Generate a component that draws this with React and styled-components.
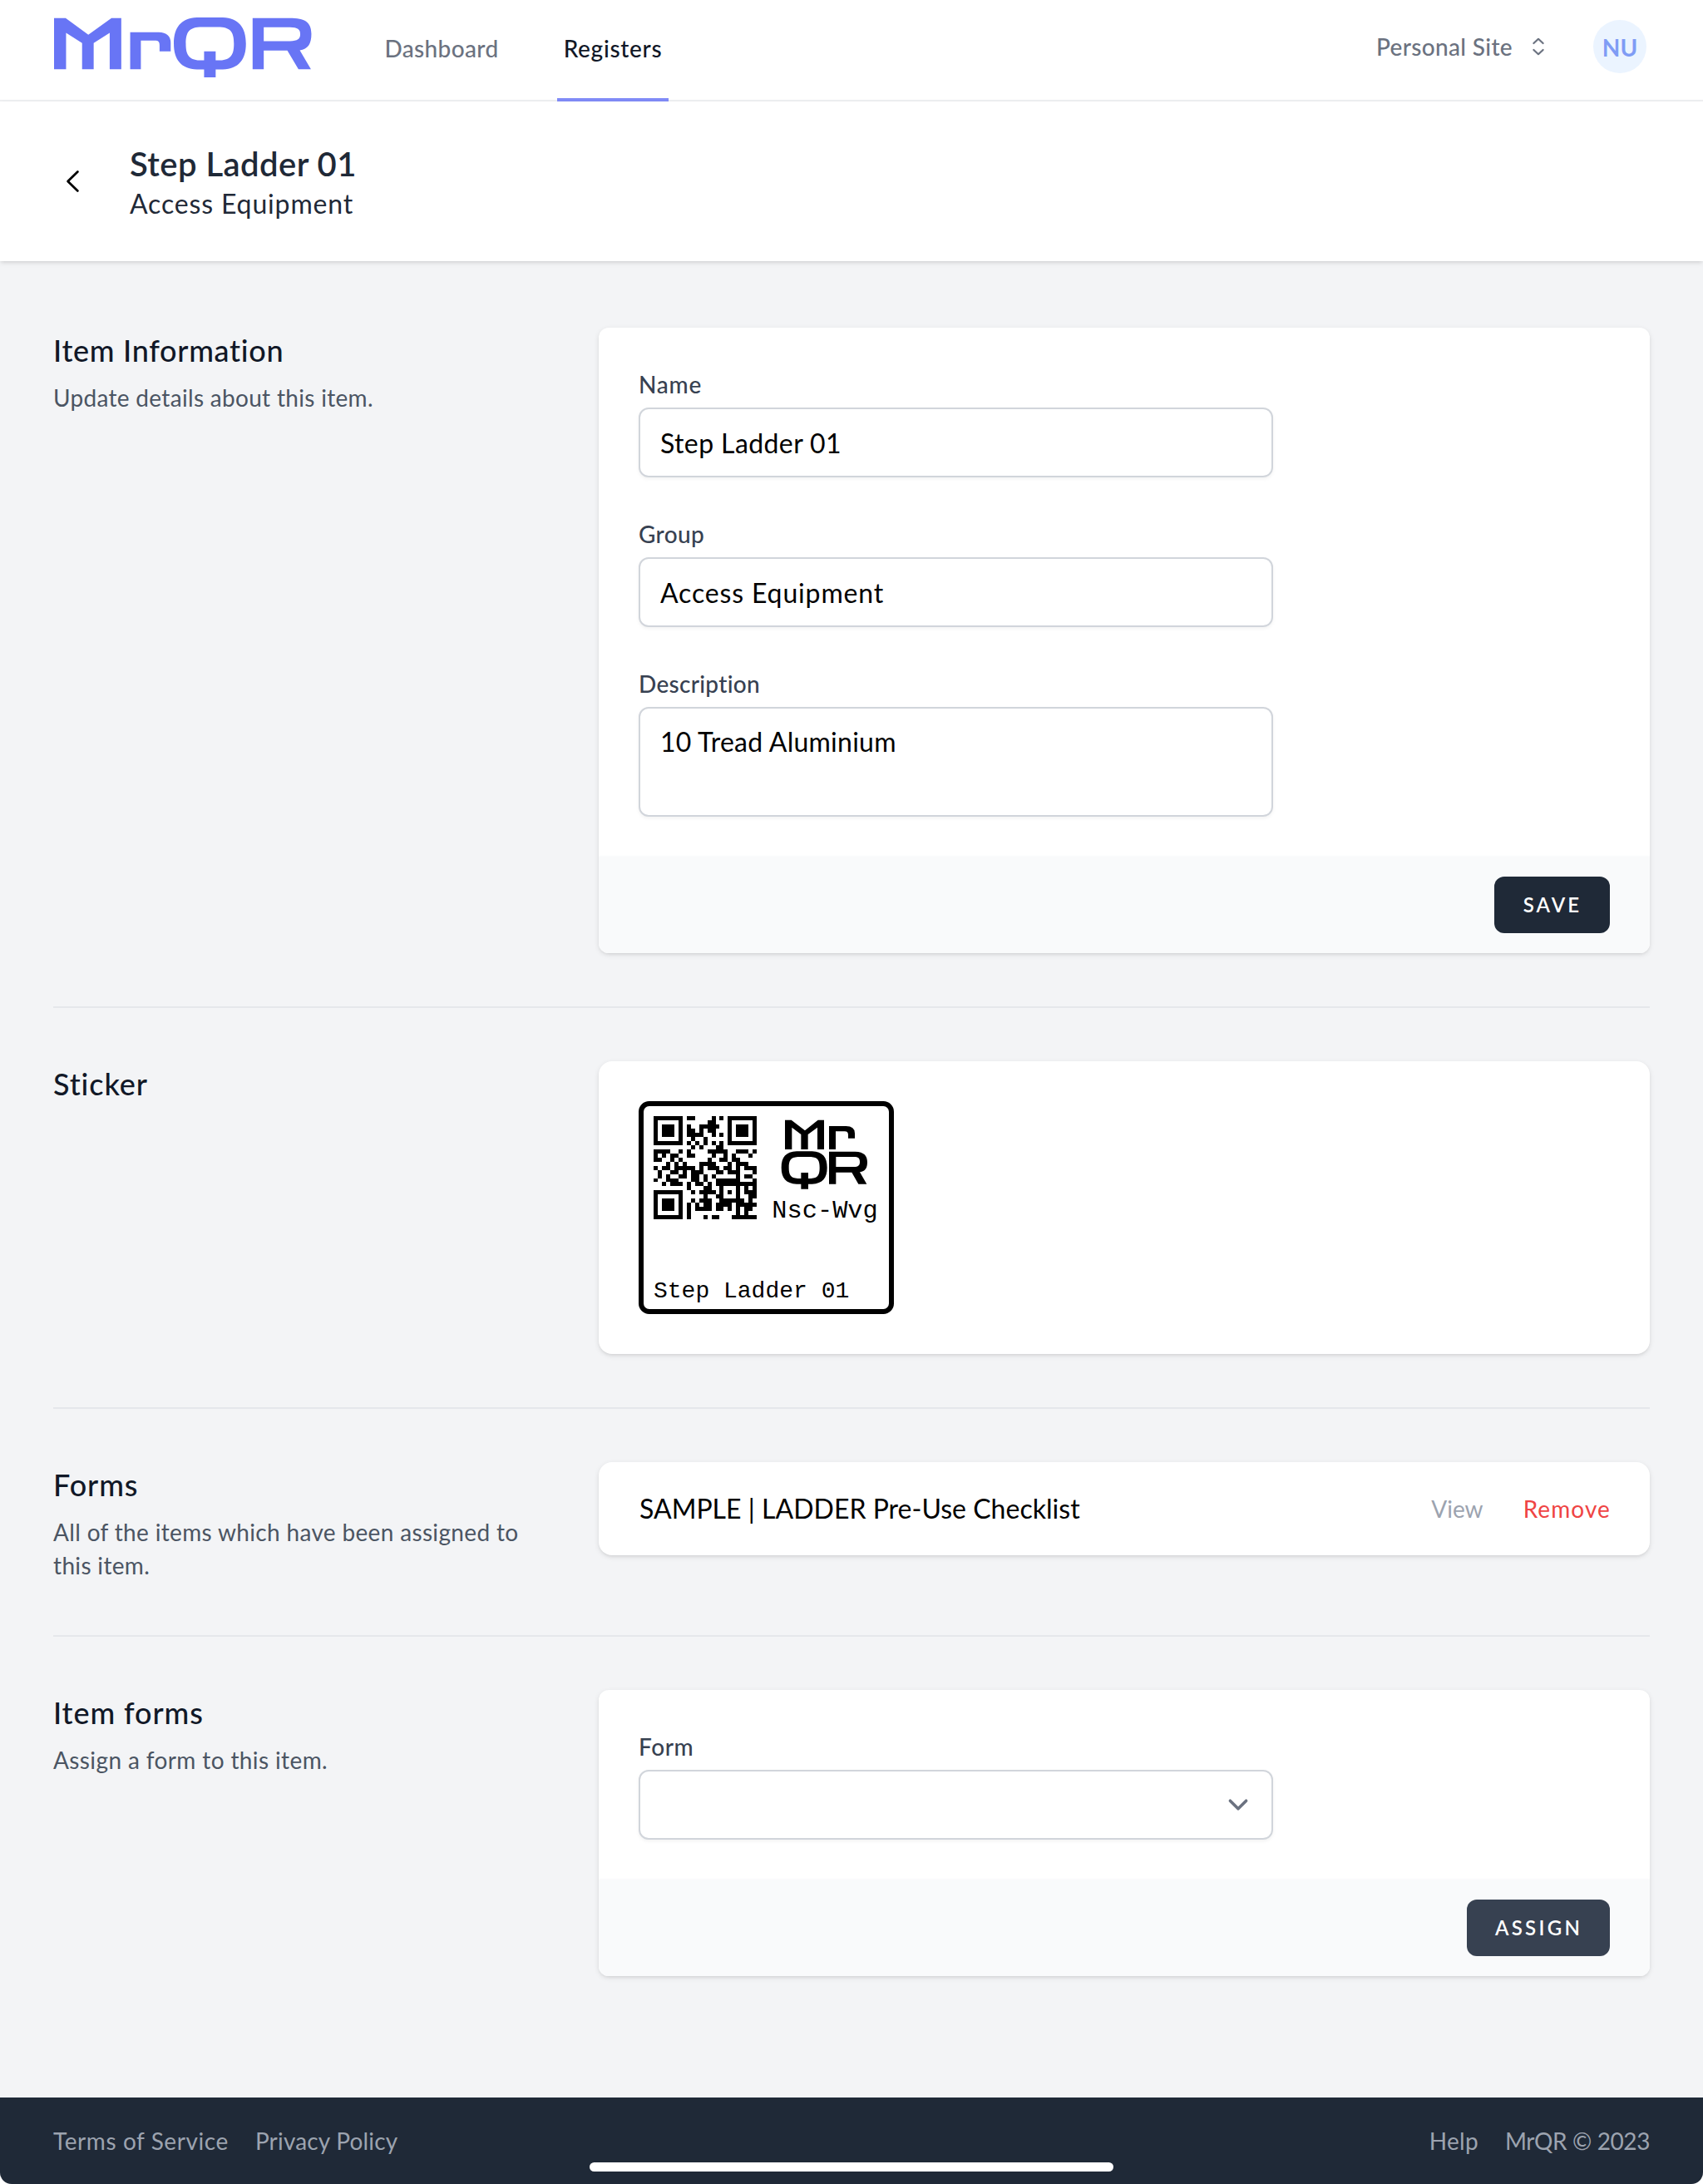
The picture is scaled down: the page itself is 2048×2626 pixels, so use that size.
import React from "react";
import styled, { createGlobalStyle, css } from "styled-components";

const GlobalStyle = createGlobalStyle`
  *, *::before, *::after { box-sizing: border-box; }
  html { background: #fff; }
  body {
    margin: 0;
    font-family: Lato, "Open Sans", sans-serif;
    -webkit-font-smoothing: antialiased;
  }
  h1, h2, p { margin: 0; }
`;

/* ---------- QR code (version 2, level L, mask 3) ---------- */

const QR_SIZE = 25;
const QR_FORMAT = "111100010011101".split("").map(Number);

function gfMultiply(a, b) {
  let r = 0;
  for (let i = 7; i >= 0; i--) {
    r = (r << 1) ^ ((r >> 7) * 0x11d);
    r ^= ((b >> i) & 1) * a;
  }
  return r & 255;
}

function errorCodewords(data, degree) {
  const gen = Array(degree).fill(0);
  gen[degree - 1] = 1;
  let root = 1;
  for (let i = 0; i < degree; i++) {
    for (let j = 0; j < degree; j++) {
      gen[j] = gfMultiply(gen[j], root);
      if (j + 1 < degree) gen[j] ^= gen[j + 1];
    }
    root = gfMultiply(root, 2);
  }
  const ecc = Array(degree).fill(0);
  for (const b of data) {
    const factor = b ^ ecc.shift();
    ecc.push(0);
    gen.forEach((g, i) => {
      ecc[i] ^= gfMultiply(g, factor);
    });
  }
  return ecc;
}

function makeQr(text) {
  const bits = [];
  const push = (v, n) => {
    for (let i = n - 1; i >= 0; i--) bits.push((v >> i) & 1);
  };
  push(4, 4);
  push(text.length, 8);
  for (const ch of text) push(ch.charCodeAt(0), 8);
  push(0, Math.min(4, 272 - bits.length));
  while (bits.length % 8) bits.push(0);
  const data = [];
  for (let i = 0; i < bits.length; i += 8) {
    data.push(parseInt(bits.slice(i, i + 8).join(""), 2));
  }
  for (let p = 0; data.length < 34; p++) data.push(p % 2 ? 17 : 236);
  const stream = [...data, ...errorCodewords(data, 10)].flatMap((b) =>
    [7, 6, 5, 4, 3, 2, 1, 0].map((i) => (b >> i) & 1)
  );

  const m = Array.from({ length: QR_SIZE }, () => Array(QR_SIZE).fill(null));
  const finder = (r0, c0) => {
    for (let r = -1; r < 8; r++) {
      for (let c = -1; c < 8; c++) {
        const y = r0 + r;
        const x = c0 + c;
        if (y < 0 || x < 0 || y >= QR_SIZE || x >= QR_SIZE) continue;
        const d = Math.max(Math.abs(r - 3), Math.abs(c - 3));
        m[y][x] = d !== 2 && d !== 4 ? 1 : 0;
      }
    }
  };
  finder(0, 0);
  finder(0, 18);
  finder(18, 0);
  for (let r = -2; r <= 2; r++) {
    for (let c = -2; c <= 2; c++) {
      m[18 + r][18 + c] = Math.max(Math.abs(r), Math.abs(c)) !== 1 ? 1 : 0;
    }
  }
  for (let i = 8; i < 17; i++) {
    m[6][i] = 1 - (i % 2);
    m[i][6] = 1 - (i % 2);
  }
  [0, 1, 2, 3, 4, 5, 7, 8].forEach((c, i) => {
    m[8][c] = QR_FORMAT[i];
  });
  [7, 5, 4, 3, 2, 1, 0].forEach((r, i) => {
    m[r][8] = QR_FORMAT[8 + i];
  });
  for (let i = 0; i < 7; i++) m[24 - i][8] = QR_FORMAT[i];
  for (let i = 7; i < 15; i++) m[8][10 + i] = QR_FORMAT[i];
  m[17][8] = 1;

  let k = 0;
  let up = true;
  for (let c = 24; c > 0; c -= 2) {
    if (c === 6) c = 5;
    for (let i = 0; i < QR_SIZE; i++) {
      const r = up ? 24 - i : i;
      for (const x of [c, c - 1]) {
        if (m[r][x] === null) {
          m[r][x] = (stream[k++] || 0) ^ ((r + x) % 3 === 0 ? 1 : 0);
        }
      }
    }
    up = !up;
  }
  return m;
}

const qrPath = (text) =>
  makeQr(text)
    .map((row, y) => row.map((v, x) => (v ? `M${x} ${y}h1v1h-1z` : "")).join(""))
    .join("");

/* ---------- Shared ---------- */

const Text = styled.span`
  display: block;
  letter-spacing: ${(p) => p.$track || 0}px;
  white-space: ${(p) => (p.$wrap ? "normal" : "nowrap")};
`;

const cardShadow = css`
  box-shadow: 0 2px 6px rgba(0, 0, 0, 0.1), 0 2px 4px -2px rgba(0, 0, 0, 0.1);
`;

const Page = styled.div`
  width: 2048px;
  min-height: 2626px;
  display: flex;
  flex-direction: column;
  background: #f3f4f6;
  border-radius: 0 0 14px 14px;
  overflow: hidden;
`;

/* ---------- Top navigation ---------- */

const Nav = styled.nav`
  height: 122px;
  display: flex;
  padding: 0 64px;
  background: #fff;
  border-bottom: 2px solid #f0f1f3;
`;

const Logo = styled.svg`
  display: block;
  width: 310px;
  height: 72px;
  margin: 20.5px 0 0 0.5px;
  fill: #6875f5;
`;

const Tabs = styled.div`
  display: flex;
  gap: 64px;
  height: 122px;
  margin-left: 81.5px;
`;

const Tab = styled.a`
  display: flex;
  align-items: center;
  width: ${(p) => p.$width}px;
  justify-content: center;
  padding-bottom: 2px;
  border-bottom: 4px solid ${(p) => (p.$active ? "#818cf8" : "transparent")};
  color: ${(p) => (p.$active ? "#111827" : "#6b7280")};
  font-size: 28px;
  font-weight: 500;
  line-height: 40px;
`;

const NavRight = styled.div`
  display: flex;
  align-items: center;
  height: 112px;
  margin-left: auto;
  padding-right: 4px;
`;

const SiteSwitch = styled.div`
  display: flex;
  align-items: center;
  gap: 15px;
  margin-right: 50px;
  color: #6b7280;
  font-size: 28px;
  font-weight: 500;
  line-height: 40px;
`;

const Avatar = styled.div`
  width: 64px;
  height: 64px;
  display: flex;
  align-items: center;
  justify-content: center;
  padding-top: 1px;
  border-radius: 50%;
  background: #ebf4ff;
  color: #7f9cf5;
  font-size: 28px;
  font-weight: 700;
`;

/* ---------- Page header ---------- */

const Header = styled.header`
  height: 192px;
  display: flex;
  align-items: center;
  padding: 0 64px;
  background: #fff;
  color: #1f2937;
  z-index: 1;
  ${cardShadow}
`;

const BackIcon = styled.svg`
  width: 48px;
  height: 48px;
  margin-right: 44px;
`;

const Heading = styled.div`
  padding-top: 6px;
`;

const Title = styled.h1`
  font-size: 40px;
  font-weight: 600;
  line-height: 48px;
`;

const Subtitle = styled.p`
  font-size: 32px;
  line-height: 48px;
`;

/* ---------- Sections ---------- */

const Main = styled.main`
  flex: 1;
  padding: 80px 64px 0;
`;

const Section = styled.section`
  display: grid;
  grid-template-columns: 608px 1264px;
  column-gap: 48px;
  align-items: start;
`;

const Divider = styled.hr`
  height: 2px;
  margin: 64px 0;
  border: 0;
  background: #e5e7eb;
`;

const SectionTitle = styled.h2`
  color: #111827;
  font-size: 36px;
  font-weight: 500;
  line-height: 54px;
  padding-bottom: 2px;
`;

const SectionText = styled.p`
  max-width: 590px;
  margin-top: 8px;
  color: #4b5563;
  font-size: 28px;
  line-height: 40px;
`;

const Card = styled.div`
  border-radius: ${(p) => p.$radius || 12}px;
  background: #fff;
  overflow: hidden;
  ${cardShadow}
`;

const CardBody = styled.div`
  display: grid;
  row-gap: 48px;
  padding: 48px;
`;

const CardFooter = styled.div`
  display: flex;
  justify-content: flex-end;
  padding: 24px 48px;
  background: #f9fafb;
  box-shadow: 0 -1px 2px #f9fafb;
`;

const Field = styled.label`
  display: flex;
  flex-direction: column;
  gap: 8px;
  width: 762.67px;
  color: #374151;
  font-size: 28px;
  font-weight: 500;
  line-height: 40px;
`;

const controlStyle = css`
  display: block;
  width: 100%;
  margin: 0;
  border: 2px solid #d1d5db;
  border-radius: 12px;
  outline: none;
  background: #fff;
  box-shadow: 0 2px 4px rgba(0, 0, 0, 0.05);
  color: #000;
  font-family: inherit;
  font-size: 32px;
  font-weight: 400;
  line-height: 48px;
`;

const Input = styled.input`
  ${controlStyle}
  height: 84px;
  padding: 16px 24px;
  letter-spacing: ${(p) => p.$track}px;
`;

const TextArea = styled.textarea`
  ${controlStyle}
  height: 132px;
  padding: 16px 24px;
  letter-spacing: 0.25px;
  resize: none;
  overflow: hidden;
`;

const Select = styled.div`
  ${controlStyle}
  height: 84px;
  display: flex;
  align-items: center;
  justify-content: flex-end;
  padding-right: 16px;
`;

const Button = styled.button`
  width: ${(p) => p.$width}px;
  height: 68px;
  padding: 0 0 0 1px;
  border: 0;
  border-radius: 12px;
  background: ${(p) => p.$color};
  color: #fff;
  font-family: inherit;
  font-size: 24px;
  font-weight: 600;
  line-height: 32px;
  text-align: center;
`;

const FormRow = styled.div`
  height: 112px;
  display: flex;
  align-items: center;
  padding: 0 47px 0 49px;
  color: #000;
  font-size: 32px;
  line-height: 48px;
`;

const RowActions = styled.div`
  display: flex;
  gap: 48px;
  margin-left: auto;
  font-size: 28px;
  line-height: 40px;
`;

const Action = styled.a`
  color: ${(p) => (p.$danger ? "#ef4444" : "#9ca3af")};
`;

const StickerImage = styled.svg`
  display: block;
  width: 307px;
  height: 256px;
`;

/* ---------- Footer ---------- */

const Footer = styled.footer`
  position: relative;
  height: 104px;
  display: flex;
  align-items: center;
  justify-content: space-between;
  padding: 0 64px;
  background: #1f2937;
  color: #9ca3af;
  font-size: 28px;
  line-height: 40px;
`;

const FooterGroup = styled.div`
  display: flex;
  gap: 32px;
`;

const HomeIndicator = styled.div`
  position: absolute;
  left: 709px;
  bottom: 15px;
  width: 630px;
  height: 11px;
  border-radius: 6px;
  background: #fff;
`;

function BrandLogo() {
  return (
    <Logo viewBox="120 61 579 215" preserveAspectRatio="none" fillRule="evenodd" role="img" aria-label="MrQR">
      <path d="M120 63H146L197 123L249 63H271V247H245V116L209 153V247H183V153L147 116V247H120Z" />
      <path d="M291 247V114H355Q382 116 382 152V183H357V160Q357 144 348 144H315V247Z" />
      <path d="M441 61H499C535 63 551 98 551 155C551 212 535 245 499 248H483V276H457V248H441C405 245 389 212 389 155C389 98 405 63 441 61ZM447 95C422 97 416 117 416 155C416 193 422 213 447 215H457V183H483V215H493C518 213 524 193 524 155C524 117 518 97 493 95Z" />
      <path d="M566 63H655C688 64 698 85 698 120C698 157 690 174 672 179L697 247H669L644 180H591V247H566ZM591 96V146H650C667 145 673 139 673 121C673 103 667 97 650 96Z" />
    </Logo>
  );
}

function Sticker() {
  return (
    <StickerImage viewBox="24 42 921 768">
      <rect x="33" y="51" width="903" height="750" rx="29" fill="#fff" stroke="#000" strokeWidth="18" />
      <g transform="translate(79 97) scale(14.84)">
        <path d={qrPath("https://mrqr.me/NscWvg")} shapeRendering="crispEdges" />
      </g>
      <g fillRule="evenodd">
        <path d="M552 110H575L624 148L671 110H693V216H669V137L635 162V216H610V162L577 137V216H552Z" />
        <path d="M711 216V132H772Q804 132 804 158V176H780V164Q780 151 768 151H735V216Z" />
        <path d="M594 223H650C688 225 704 244 704 282C704 320 688 339 650 341H636V359H610V341H594C555 339 539 320 539 282C539 244 555 225 594 223ZM598 243C572 245 566 256 566 282C566 308 572 319 598 321H610V300H636V321H646C671 319 677 308 677 282C677 256 671 245 646 243Z" />
        <path d="M711 224H805C838 225 849 239 849 262C849 284 842 295 822 298L847 341H817L793 299H736V341H711ZM736 243V279H800C817 279 822 274 822 261C822 248 817 243 800 243Z" />
      </g>
      <g fontFamily='"Liberation Mono", monospace'>
        <text x="505" y="463" fontSize="91">Nsc-Wvg</text>
        <text x="78" y="751" fontSize="84">Step Ladder 01</text>
      </g>
    </StickerImage>
  );
}

export default function App() {
  return (
    <>
      <GlobalStyle />
      <Page>
        <Nav>
          <BrandLogo />
          <Tabs>
            <Tab $width={150}><Text $track={0.35}>Dashboard</Text></Tab>
            <Tab $width={134} $active><Text $track={0.7}>Registers</Text></Tab>
          </Tabs>
          <NavRight>
            <SiteSwitch>
              <Text $track={0.35}>Personal Site</Text>
              <svg width="32" height="32" viewBox="0 0 32 32" fill="none" stroke="currentColor" strokeWidth="2.2" strokeLinecap="round" strokeLinejoin="round">
                <path d="M10.4 12L16 6.8L21.6 12M10.4 20L16 25.2L21.6 20" />
              </svg>
            </SiteSwitch>
            <Avatar><Text>NU</Text></Avatar>
          </NavRight>
        </Nav>

        <Header>
          <BackIcon viewBox="0 0 48 48" fill="none" stroke="#000" strokeWidth="2.8" strokeLinecap="round" strokeLinejoin="round">
            <path d="M29.4 12.4L17.6 24L29.4 35.4" />
          </BackIcon>
          <Heading>
            <Title><Text $track={0.45}>Step Ladder 01</Text></Title>
            <Subtitle><Text $track={0.85}>Access Equipment</Text></Subtitle>
          </Heading>
        </Header>

        <Main>
          <Section>
            <div>
              <SectionTitle><Text $track={0.7}>Item Information</Text></SectionTitle>
              <SectionText><Text $track={0.31}>Update details about this item.</Text></SectionText>
            </div>
            <Card>
              <CardBody>
                <Field><Text $track={0.8}>Name</Text><Input $track={0.4} defaultValue="Step Ladder 01" /></Field>
                <Field><Text $track={0.4}>Group</Text><Input $track={0.85} defaultValue="Access Equipment" /></Field>
                <Field><Text $track={0.3}>Description</Text><TextArea defaultValue="10 Tread Aluminium" /></Field>
              </CardBody>
              <CardFooter>
                <Button $width={139} $color="#1f2937"><Text $track={3.05}>SAVE</Text></Button>
              </CardFooter>
            </Card>
          </Section>

          <Divider />

          <Section>
            <SectionTitle><Text $track={0.9}>Sticker</Text></SectionTitle>
            <Card $radius={16}>
              <CardBody><Sticker /></CardBody>
            </Card>
          </Section>

          <Divider />

          <Section>
            <div>
              <SectionTitle><Text $track={0.9}>Forms</Text></SectionTitle>
              <SectionText><Text $wrap $track={0.34}>All of the items which have been assigned to this item.</Text></SectionText>
            </div>
            <Card $radius={16}>
              <FormRow>
                <Text $track={0.02}>SAMPLE | LADDER Pre-Use Checklist</Text>
                <RowActions>
                  <Action><Text>View</Text></Action>
                  <Action $danger><Text $track={1.1}>Remove</Text></Action>
                </RowActions>
              </FormRow>
            </Card>
          </Section>

          <Divider />

          <Section>
            <div>
              <SectionTitle><Text $track={0.9}>Item forms</Text></SectionTitle>
              <SectionText><Text $track={0.38}>Assign a form to this item.</Text></SectionText>
            </div>
            <Card>
              <CardBody>
                <Field>
                  <Text $track={0.6}>Form</Text>
                  <Select>
                    <svg width="48" height="48" viewBox="0 0 20 20" fill="none" stroke="#6b7280" strokeWidth="1.5" strokeLinecap="round" strokeLinejoin="round">
                      <path d="M6 8l4 4 4-4" />
                    </svg>
                  </Select>
                </Field>
              </CardBody>
              <CardFooter>
                <Button $width={172} $color="#374151"><Text $track={3.29}>ASSIGN</Text></Button>
              </CardFooter>
            </Card>
          </Section>
        </Main>

        <Footer>
          <FooterGroup>
            <Text $track={0.58}>Terms of Service</Text>
            <Text $track={0.18}>Privacy Policy</Text>
          </FooterGroup>
          <FooterGroup>
            <Text $track={0.3}>Help</Text>
            <Text $track={-0.4}>MrQR © 2023</Text>
          </FooterGroup>
          <HomeIndicator />
        </Footer>
      </Page>
    </>
  );
}
